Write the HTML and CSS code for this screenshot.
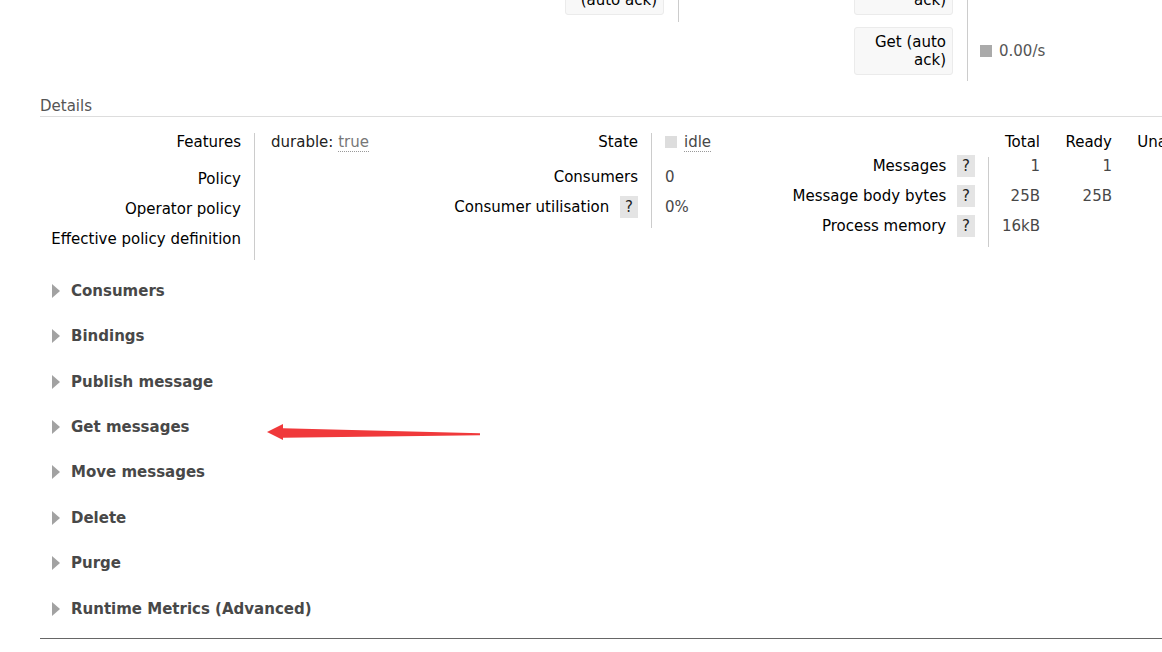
FILE: index.html
```html
<!DOCTYPE html>
<html lang="en">
<head>
  <meta charset="UTF-8">
  <title>Queue details</title>
  <link rel="stylesheet" href="styles.css">
</head>
<body>
<div class="page">

  <div class="rates">
    <div class="chart"></div>
    <table class="legend legend-a">
      <tr class="last">
        <th><button class="rate-btn">Deliver<br>(auto ack)</button></th>
        <td></td>
      </tr>
    </table>
    <table class="legend legend-b">
      <tr>
        <th><button class="rate-btn">Get (man.<br>ack)</button></th>
        <td></td>
      </tr>
      <tr class="last">
        <th><button class="rate-btn">Get (auto<br>ack)</button></th>
        <td><span class="swatch"></span>0.00/s</td>
      </tr>
    </table>
  </div>

  <h3 class="section-title">Details</h3>

  <div class="details">
    <table class="facts facts-a">
      <tr class="tall">
        <th>Features</th>
        <td><span class="feat">durable:</span> <abbr class="dotted muted">true</abbr></td>
      </tr>
      <tr><th>Policy</th><td></td></tr>
      <tr><th>Operator policy</th><td></td></tr>
      <tr><th>Effective policy definition</th><td></td></tr>
    </table>

    <table class="facts facts-b">
      <tr class="tall-b">
        <th>State</th>
        <td><span class="state-box"></span><abbr class="dotted">idle</abbr></td>
      </tr>
      <tr><th>Consumers</th><td>0</td></tr>
      <tr><th>Consumer utilisation <span class="help">?</span></th><td>0%</td></tr>
    </table>

    <table class="facts facts-c">
      <tr class="head">
        <th class="blank"></th>
        <td class="num n1">Total</td>
        <td class="num n2">Ready</td>
        <td class="num n3">Unacked</td>
      </tr>
      <tr>
        <th>Messages <span class="help">?</span></th>
        <td class="num">1</td>
        <td class="num">1</td>
        <td class="num">0</td>
      </tr>
      <tr>
        <th>Message body bytes <span class="help">?</span></th>
        <td class="num">25B</td>
        <td class="num">25B</td>
        <td class="num">0B</td>
      </tr>
      <tr>
        <th>Process memory <span class="help">?</span></th>
        <td class="num">16kB</td>
        <td class="num"></td>
        <td class="num"></td>
      </tr>
    </table>
  </div>

  <div class="sections">
    <div class="section"><span class="toggle"></span>Consumers</div>
    <div class="section"><span class="toggle"></span>Bindings</div>
    <div class="section"><span class="toggle"></span>Publish message</div>
    <div class="section">
      <span class="toggle"></span>Get messages
      <svg class="arrow" width="216" height="24" viewBox="0 0 216 24">
        <polygon points="0,12 16,4 16,8.3 213,13.3 213,15.3 16,17.7 16,20" fill="#f0393b"/>
      </svg>
    </div>
    <div class="section"><span class="toggle"></span>Move messages</div>
    <div class="section"><span class="toggle"></span>Delete</div>
    <div class="section"><span class="toggle"></span>Purge</div>
    <div class="section"><span class="toggle"></span>Runtime Metrics (Advanced)</div>
  </div>

  <div class="footer"></div>
</div>
</body>
</html>
```

FILE: styles.css
```css
html, body {
  margin: 0;
  overflow: hidden;
  background: #fff;
}
body {
  font-family: "DejaVu Sans", Verdana, sans-serif;
  font-size: 15px;
  line-height: 18px;
  color: #484848;
}
.page {
  margin-left: 40px;
}

table {
  border-collapse: separate;
  border-spacing: 0;
  font-size: inherit;
  flex-shrink: 0;
}

/* rates legend (top of the chart, mostly scrolled off) */
.rates {
  display: flex;
  align-items: flex-start;
  margin-top: -33px;
}
.chart {
  width: 525px;
  flex-shrink: 0;
}
.legend th {
  font-weight: normal;
  padding: 0 14px 12px 0;
  border-right: 1px solid #ccc;
}
.legend td {
  padding: 0 0 12px 12px;
  vertical-align: middle;
  color: #555;
  white-space: nowrap;
}
.legend-a tr.last th, .legend-a tr.last td { padding-bottom: 7px; }
.legend-b tr.last th, .legend-b tr.last td { padding-bottom: 6px; }
.legend-a td { width: 163px; }
.rate-btn {
  display: block;
  box-sizing: border-box;
  width: 99px;
  padding: 5px 6px;
  font: inherit;
  line-height: 18px;
  color: #000;
  text-align: right;
  white-space: nowrap;
  overflow: hidden;
  background: #f8f8f8;
  border: 1px solid #ebebeb;
  border-radius: 3px;
}
.swatch {
  display: inline-block;
  width: 12px;
  height: 12px;
  margin-right: 7px;
  background: #aaa;
  vertical-align: -1px;
}

.section-title {
  margin: 16px 0 0;
  padding-bottom: 1px;
  font-size: 15px;
  font-weight: normal;
  line-height: 18px;
  color: #555;
  border-bottom: 1px solid #ddd;
}

/* details tables */
.details {
  display: flex;
  align-items: flex-start;
  margin-top: 16px;
}
.facts th {
  font-weight: normal;
  text-align: right;
  color: #000;
  white-space: nowrap;
  vertical-align: top;
  padding: 0 13px 12px 0;
  border-right: 1px solid #ccc;
}
.facts td {
  vertical-align: top;
  white-space: nowrap;
  padding: 0 0 12px 16px;
}
.facts-a { width: 390px; }
.facts-a th { width: 201px; }
.facts-a tr.tall th, .facts-a tr.tall td { padding-bottom: 19px; }

.facts-b { width: 331px; }
.facts-b th { width: 208px; }
.facts-b td { padding-left: 13px; }
.facts-b tr.tall-b th, .facts-b tr.tall-b td { padding-bottom: 17px; }

.facts-c { width: 441px; }
.facts-c th { width: 214px; }
.facts-c th.blank { border-right: none; padding-right: 14px; }
.facts-c tr.head th, .facts-c tr.head td { padding-bottom: 6px; }
.facts-c td.num {
  padding-left: 0;
  text-align: right;
}
.facts-c tr.head td { color: #000; }
.facts-c .n1 { width: 51px; }
.facts-c .n2 { width: 72px; }
.facts-c .n3 { width: 90px; }

.feat { color: #222; }
abbr.dotted {
  text-decoration: none;
  border-bottom: 1px dotted #999;
}
.muted { color: #777; }
.state-box {
  display: inline-block;
  width: 12px;
  height: 12px;
  margin-right: 7px;
  background: #ddd;
  vertical-align: -1px;
}
.help {
  display: inline-block;
  width: 18px;
  padding: 2px 0;
  margin: -2px 0 -2px 6px;
  background: #e4e4e4;
  color: #222;
  text-align: center;
  vertical-align: top;
}

/* collapsible sections */
.sections {
  margin-top: 8.3px;
}
.section {
  position: relative;
  display: flex;
  align-items: center;
  padding: 13.7px 0;
  font-weight: bold;
  color: #484848;
}
.toggle {
  width: 0;
  height: 0;
  margin: 0 11px 0 12px;
  border-left: 8px solid #a2a2a2;
  border-top: 7.5px solid transparent;
  border-bottom: 7.5px solid transparent;
}
.arrow {
  position: absolute;
  left: 227px;
  top: 15.5px;
}

.footer {
  margin-top: 6.5px;
  border-top: 1px solid #666;
}
```
